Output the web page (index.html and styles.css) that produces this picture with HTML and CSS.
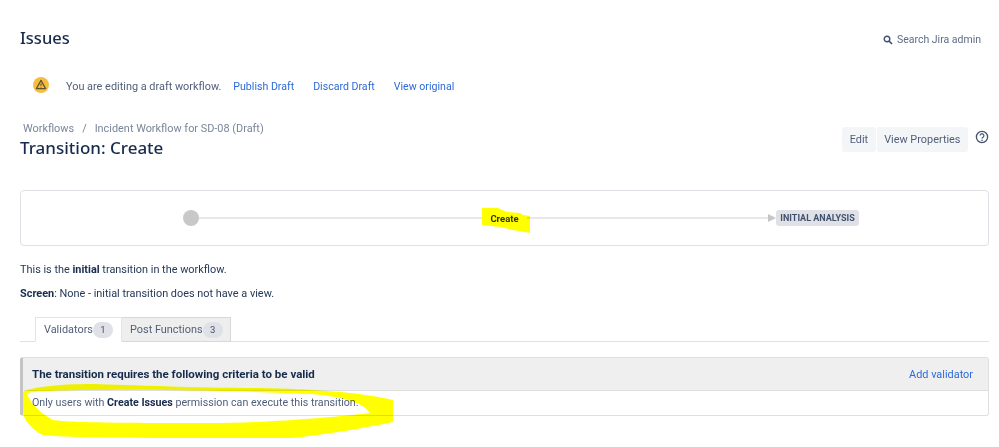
FILE: index.html
```html
<!DOCTYPE html>
<html lang="en">
<head>
<meta charset="utf-8">
<title>Transition: Create</title>
<link rel="stylesheet" href="styles.css">
</head>
<body>
<div class="page">
  <header class="top">
    <h1 class="issues">Issues</h1>
    <a class="search">
      <svg class="search-icon" viewBox="0 0 10 10" width="10" height="10"><circle cx="4" cy="4" r="2.8" fill="none" stroke="#42526e" stroke-width="1.4"/><path d="M6 6l3 3" stroke="#42526e" stroke-width="1.7"/></svg>
      <span>Search Jira admin</span>
    </a>
  </header>
  <div class="draft">
    <svg class="warn" viewBox="0 0 16 16" width="16" height="16"><circle cx="8" cy="8" r="8" fill="#f5bd41"/><path d="M8 3.4L12.6 11.6H3.4Z" fill="none" stroke="#5e5233" stroke-width="1.2" stroke-linejoin="round"/><path d="M8 6.4v2.6M8 9.8v.8" stroke="#5e5233" stroke-width="1"/></svg>
    <span class="draft-text">You are editing a draft workflow.</span>
    <a class="link">Publish Draft</a>
    <a class="link">Discard Draft</a>
    <a class="link">View original</a>
  </div>
  <div class="head">
    <div>
      <nav class="crumbs"><span>Workflows</span><span class="sep">/</span><span>Incident Workflow for SD-08 (Draft)</span></nav>
      <h2 class="title">Transition: Create</h2>
    </div>
    <div class="actions">
      <button class="btn">Edit</button>
      <button class="btn">View Properties</button>
      <svg class="help" viewBox="0 0 14 14" width="14" height="14"><circle cx="7" cy="7" r="5.6" fill="none" stroke="#42526e" stroke-width="1.3"/><path d="M5.1 5.6a1.9 1.9 0 1 1 2.9 1.6c-.7.4-1 .7-1 1.4" fill="none" stroke="#42526e" stroke-width="1.2"/><circle cx="7" cy="10.3" r=".8" fill="#42526e"/></svg>
    </div>
  </div>
  <section class="diagram">
    <span class="dot"></span>
    <span class="line"></span>
    <span class="step">Create</span>
    <span class="line"></span>
    <span class="arrow"></span>
    <span class="status">INITIAL ANALYSIS</span>
  </section>
  <p class="para first">This is the <b>initial</b> transition in the workflow.</p>
  <p class="para second"><b>Screen</b>: None - initial transition does not have a view.</p>
  <div class="tabs">
    <div class="tab active">Validators <span class="count">1</span></div>
    <div class="tab">Post Functions <span class="count">3</span></div>
  </div>
  <section class="panel">
    <div class="panel-head"><b>The transition requires the following criteria to be valid</b><a class="link">Add validator</a></div>
    <div class="panel-body">Only users with <b>Create Issues</b> permission can execute this transition.</div>
  </section>
</div>
<svg class="marks" viewBox="0 0 999 447" width="999" height="447">
  <path d="M482 208L498 208L507 212L520 213L523 215L530 216L530 233L513 230L500 227L482 225Z" fill="#ffff00"/>
  <path d="M23 392C30 387 60 384 93 384C130 385 200 388 260 388C310 389 360 392 393 400L393 422C370 427 330 434 293 438L210 438C150 438 70 438 43 435C35 432 23 420 23 412ZM27 393C28 400 38 412 53 420C70 423 150 423 210 423C260 423 330 418 370 413C365 405 350 397 310 394C260 392 170 389 110 390C80 390 45 390 27 393Z" fill="#ffff00" fill-rule="evenodd"/>
</svg>
</body>
</html>
```
FILE: styles.css
```css
* { box-sizing: border-box; }
html, body { margin: 0; padding: 0; background: #fff; }
body {
  width: 999px;
  height: 447px;
  overflow: hidden;
  position: relative;
  font-family: Roboto, "Noto Sans", sans-serif;
  font-size: 10.9px;
  color: #253858;
}
b { color: #172b4d; font-weight: 700; }
.page { padding: 0 10px 0 20px; }
.top { display: flex; justify-content: space-between; align-items: center; height: 76px; padding-right: 8px; }
.issues { margin: 0; font-family: "Noto Sans", sans-serif; font-size: 16.5px; font-weight: 500; color: #172b4d; line-height: 24px; }
.search { display: flex; align-items: center; gap: 4px; color: #5e6c84; margin-top: 3px; font-size: 10.5px; }
.search-icon { display: block; }
.draft { display: flex; align-items: center; height: 20px; padding-left: 13px; color: #505f79; }
.warn { display: block; margin-right: 17px; margin-top: -3px; }
.draft-text { margin-right: 12px; }
.link { color: #2d6ad9; }
.draft .link { margin-right: 19px; font-size: 10.6px; }
.head { display: flex; justify-content: space-between; align-items: flex-start; margin-top: 25px; height: 69px; }
.crumbs { color: #7a869a; padding-left: 3px; line-height: 14px; margin-top: 1px; }
.sep { margin: 0 8px; }
.title { margin: 0; font-family: "Noto Sans", sans-serif; font-size: 17px; font-weight: 500; color: #172b4d; line-height: 24px; }
.actions { display: flex; align-items: center; gap: 1px; padding-top: 6px; }
.btn { border: 0; height: 25px; padding: 0 7.5px; background: #f4f5f7; color: #505f79; font: inherit; border-radius: 3px; }
.help { display: block; margin: -5px 0 0 6px; }
.diagram { display: flex; align-items: center; height: 56px; border: 1px solid #dfe1e6; border-radius: 4px; padding-left: 162px; }
.dot { width: 16px; height: 16px; border-radius: 50%; background: #c8c8c8; flex: none; }
.line { height: 1.5px; background: #e8e8e8; flex: none; width: 283px; }
.step { flex: none; width: 45px; text-align: center; font-size: 9.5px; font-weight: 700; color: #333; }
.line + .step + .line { width: 241px; }
.arrow { flex: none; width: 0; height: 0; border-left: 8px solid #c6c6c6; border-top: 4px solid transparent; border-bottom: 4px solid transparent; }
.status { flex: none; width: 83px; height: 16px; line-height: 16px; text-align: center; background: #dfe1e6; border-radius: 3px; font-size: 9px; font-weight: 700; color: #42526e; }
.para { margin: 0; line-height: 16px; }
.first { margin-top: 16px; }
.second { margin-top: 8px; }
.tabs { display: flex; margin-top: 15px; height: 25px; border-bottom: 1px solid #dfe1e6; padding-left: 15px; }
.tab { display: flex; align-items: center; justify-content: space-between; height: 25px; padding: 0 8px; background: #eeeeee; border: 1px solid #d8d8d8; color: #505f79; white-space: nowrap; }
.tab.active { background: #fff; border-color: #e4e4e4; border-bottom-color: #fff; width: 87px; }
.tab + .tab { width: 109px; border-left: 0; }
.count { display: inline-block; min-width: 20px; height: 16px; line-height: 16px; text-align: center; border-radius: 8px; background: #dfe1e6; color: #42526e; font-size: 9.5px; }
.panel { margin-top: 15px; border: 1px solid #dfdfdf; border-left: 3px solid #c4c4c4; border-radius: 3px; }
.panel-head { display: flex; justify-content: space-between; align-items: center; height: 33px; padding: 0 15px 0 9px; background: #efefef; border-bottom: 1px solid #dfdfdf; }
.panel-head b { font-size: 11.5px; }
.panel-body { height: 24px; line-height: 24px; padding-left: 9px; color: #505f79; font-size: 10.7px; }
.marks { position: absolute; left: 0; top: 0; pointer-events: none; mix-blend-mode: multiply; }
```
